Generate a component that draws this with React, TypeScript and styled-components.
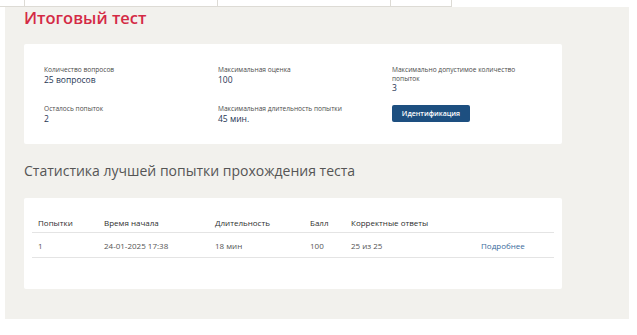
import styled, {createGlobalStyle} from "styled-components";

const GlobalStyle = createGlobalStyle`
    body {
        margin: 0;
        background: #ffffff;
        font-family: "Open Sans", "Noto Sans", sans-serif;
    }
`

const tabs = [24, 193, 173, 62]

const info = [
    {label: 'Количество вопросов', value: '25 вопросов'},
    {label: 'Максимальная оценка', value: '100'},
    {label: 'Максимально допустимое количество попыток', value: '3'},
    {label: 'Осталось попыток', value: '2'},
    {label: 'Максимальная длительность попытки', value: '45 мин.'},
]

const columns = [
    {title: 'Попытки', width: 66},
    {title: 'Время начала', width: 111},
    {title: 'Длительность', width: 95},
    {title: 'Балл', width: 41},
    {title: 'Корректные ответы', width: 130},
    {title: '', width: 79},
]

const attempts = [
    {n: '1', start: '24-01-2025 17:38', duration: '18 мин', score: '100', correct: '25 из 25'},
]

export default function App() {

    return (
        <>
            <GlobalStyle/>
            <TopStrip>
                {tabs.map((w, i) => (
                    <Tab key={i} $w={w} $first={i === 0} $last={i === tabs.length - 1}/>
                ))}
            </TopStrip>

            <Panel>
                <Title>Итоговый тест</Title>

                <Card>
                    <InfoGrid>
                        {info.map(item => (
                            <InfoItem key={item.label}>
                                <Label>{item.label}</Label>
                                <Value>{item.value}</Value>
                            </InfoItem>
                        ))}
                        <InfoItem>
                            <Button>Идентификация</Button>
                        </InfoItem>
                    </InfoGrid>
                </Card>

                <SectionTitle>Статистика лучшей попытки прохождения теста</SectionTitle>

                <StatsCard>
                    <Table>
                        <colgroup>
                            {columns.map((c, i) => <col key={i} style={{width: c.width}}/>)}
                        </colgroup>
                        <thead>
                        <tr>
                            {columns.map((c, i) => <Th key={i}>{c.title}</Th>)}
                        </tr>
                        </thead>
                        <tbody>
                        {attempts.map(a => (
                            <tr key={a.n}>
                                <Td>{a.n}</Td>
                                <Td>{a.start}</Td>
                                <Td>{a.duration}</Td>
                                <Td>{a.score}</Td>
                                <Td>{a.correct}</Td>
                                <Td><MoreLink href="#">Подробнее</MoreLink></Td>
                            </tr>
                        ))}
                        </tbody>
                    </Table>
                </StatsCard>
            </Panel>
        </>
    );
}

const TopStrip = styled.div`
    display: flex;
    height: 6px;
`

const Tab = styled.div<{ $w: number, $first: boolean, $last: boolean }>`
    width: ${p => p.$w}px;
    border-bottom: 1px solid #dddbd5;
    border-left: ${p => p.$first ? 'none' : '1px solid #dddbd5'};
    border-right: ${p => p.$last ? '1px solid #dddbd5' : 'none'};
    box-sizing: border-box;
    height: 7px;
`

const Panel = styled.div`
    margin-left: 5px;
    margin-top: 1px;
    width: 624px;
    height: 312px;
    box-sizing: border-box;
    background: #f2f1ed;
    padding: 0 0 0 19px;
`

const Title = styled.h1`
    margin: 0;
    padding-top: 1px;
    font-size: 16.5px;
    line-height: 20px;
    font-weight: 600;
    color: #d42a45;
`

const Card = styled.div`
    margin-top: 16px;
    width: 538px;
    height: 100px;
    box-sizing: border-box;
    background: #ffffff;
    border-radius: 2px;
    padding: 22px 20px 0;
`

const InfoGrid = styled.div`
    display: grid;
    grid-template-columns: 174px 174px 128px;
    grid-template-rows: 39px auto;
`

const InfoItem = styled.div`
    display: flex;
    flex-direction: column;
    align-items: flex-start;
`

const Label = styled.span`
    font-size: 6.6px;
    line-height: 8.5px;
    color: #4a4a4a;
`

const Value = styled.span`
    font-size: 8.5px;
    line-height: 10px;
    color: #1f3654;
`

const Button = styled.button`
    display: block;
    width: 78px;
    height: 17px;
    border: none;
    border-radius: 2px;
    background: #1d4f80;
    color: #ffffff;
    font-family: "Open Sans", sans-serif;
    font-size: 7px;
    font-weight: 600;
    padding: 0;
`

const SectionTitle = styled.h2`
    margin: 17px 0 0;
    font-size: 14px;
    line-height: 20px;
    font-weight: 400;
    color: #555555;
`

const StatsCard = styled.div`
    margin-top: 17px;
    width: 538px;
    height: 91px;
    box-sizing: border-box;
    background: #ffffff;
    border-radius: 2px;
    padding: 14px 8px 0;
`

const Table = styled.table`
    width: 522px;
    border-collapse: collapse;
    table-layout: fixed;
`

const Th = styled.th`
    text-align: left;
    font-weight: 400;
    font-size: 8px;
    color: #2e2e2e;
    height: 20px;
    padding: 0 6px;
    border-bottom: 1px solid #e4e4e4;
`

const Td = styled.td`
    font-size: 8px;
    color: #555555;
    height: 24px;
    padding: 0 6px;
    border-bottom: 1px solid #e4e4e4;
`

const MoreLink = styled.a`
    color: #3a6a9c;
    text-decoration: none;
`
